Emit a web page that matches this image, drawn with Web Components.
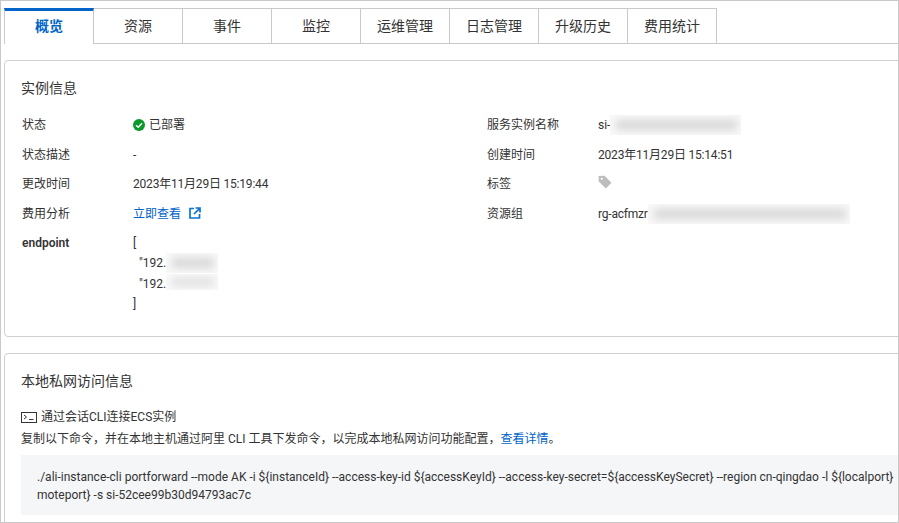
<!DOCTYPE html>
<html lang="zh">
<head>
<meta charset="utf-8">
<style>
  html, body { margin: 0; padding: 0; background: #fff; }
  body { font: 12px/20px Roboto, "Noto Sans CJK SC", sans-serif; color: #333; }
</style>
</head>
<body>
<page-frame>
  <tab-bar>
    <tab-item active>概览</tab-item>
    <tab-item>资源</tab-item>
    <tab-item>事件</tab-item>
    <tab-item>监控</tab-item>
    <tab-item>运维管理</tab-item>
    <tab-item>日志管理</tab-item>
    <tab-item>升级历史</tab-item>
    <tab-item>费用统计</tab-item>
  </tab-bar>

  <info-card heading="实例信息" style="--card-height: 277px; margin-top: 16px">
    <info-grid>
      <info-row label="状态"><status-ok>已部署</status-ok></info-row>
      <info-row label="服务实例名称">si-<blur-mask w="131" h="20"></blur-mask></info-row>
      <info-row label="状态描述">-</info-row>
      <info-row label="创建时间"><tight-text>2023年11月29日 15:14:51</tight-text></info-row>
      <info-row label="更改时间"><tight-text>2023年11月29日 15:19:44</tight-text></info-row>
      <info-row label="标签"><tag-icon></tag-icon></info-row>
      <info-row label="费用分析"><ext-link>立即查看</ext-link></info-row>
      <info-row label="资源组"><tight-text>rg-acfmzr</tight-text><blur-mask w="202" h="20"></blur-mask></info-row>
      <info-row label="endpoint" strong>
        <endpoint-list>
          <div>[</div>
          <div class="ip">"192.<blur-mask w="52" h="20"></blur-mask></div>
          <div class="ip">"192.<blur-mask w="52" h="16"></blur-mask></div>
          <div>]</div>
        </endpoint-list>
      </info-row>
    </info-grid>
  </info-card>

  <info-card heading="本地私网访问信息" style="--card-height: 300px; margin-top: 16px">
    <access-guide>
      <span slot="title">通过会话CLI连接ECS实例</span>
      <span slot="desc">复制以下命令，并在本地主机通过阿里 CLI 工具下发命令，以完成本地私网访问功能配置，<a-link>查看详情</a-link>。</span>
      <code-block>./ali-instance-cli portforward --mode AK -i ${instanceId} --access-key-id ${accessKeyId} --access-key-secret=${accessKeySecret} --region cn-qingdao -l ${localport}
moteport} -s si-52cee99b30d94793ac7c</code-block>
    </access-guide>
  </info-card>
</page-frame>

<script>
function component(name, css, html, setup) {
  class C extends HTMLElement {
    constructor() {
      super();
      const shadow = this.attachShadow({ mode: "open" });
      shadow.innerHTML = `<style>${css}</style>${html}`;
    }
    connectedCallback() {
      if (setup) setup(this);
    }
  }
  customElements.define(name, C);
}

component("page-frame", `
  :host { display: block; box-sizing: border-box; width: 899px; height: 523px; border: 1px solid #c9c9c9; overflow: hidden; padding: 7px 0 0 3px; }
`, `<slot></slot>`);

component("tab-bar", `
  :host { display: flex; height: 36px; box-sizing: border-box; border-bottom: 1px solid #c9c9c9; margin-right: -1px; }
`, `<slot></slot>`);

component("tab-item", `
  :host { display: flex; align-items: center; justify-content: center; box-sizing: border-box; width: 89px; height: 36px; padding-bottom: 1px; font-size: 14px; color: #333; border: 1px solid #c9c9c9; border-left: 0; background: #fff; }
  :host([active]) { width: 90px; color: #0064c8; font-weight: 600; border-left: 1px solid #c9c9c9; border-top: 3px solid #0064c8; border-bottom: 0; padding-bottom: 3px; }
`, `<slot></slot>`);

component("info-card", `
  :host { display: block; box-sizing: border-box; width: 1000px; height: var(--card-height); border: 1px solid #d0d0d0; border-radius: 4px; padding: 17px 16px 0; }
  h3 { margin: 0 0 16px; font-size: 14px; line-height: 20px; font-weight: 400; color: #333; }
`, `<h3></h3><slot></slot>`, el => {
  el.shadowRoot.querySelector("h3").textContent = el.getAttribute("heading");
});

component("info-grid", `
  :host { display: grid; grid-template-columns: 465px 1fr; row-gap: 9.5px; padding-top: 1px; }
`, `<slot></slot>`);

component("info-row", `
  :host { display: grid; grid-template-columns: 111px 1fr; line-height: 20px; padding-left: 1px; }
  :host([strong]) .label { font-weight: 600; }
  .label { color: #333; height: 20px; }
  .value { min-height: 20px; }
`, `<div class="label"></div><div class="value"><slot></slot></div>`, el => {
  el.shadowRoot.querySelector(".label").textContent = el.getAttribute("label");
});

component("tight-text", `:host { letter-spacing: -.2px; }`, `<slot></slot>`);

component("endpoint-list", `
  :host { display: block; }
  ::slotted(div) { height: 20.300px; }
  ::slotted(.ip) { padding-left: 6px; }
`, `<slot></slot>`);

component("blur-mask", `
  :host { display: inline-block; position: relative; overflow: hidden; vertical-align: top; background: #f9f9f9; }
  i { position: absolute; left: 6px; right: 4px; top: 5px; bottom: 5px; background: #d6d6d6; filter: blur(4px); }
`, `<i></i>`, el => {
  el.style.width = el.getAttribute("w") + "px";
  el.style.height = el.getAttribute("h") + "px";
});

component("status-ok", `
  :host { display: flex; align-items: center; gap: 4px; height: 20px; }
  svg { display: block; }
`, `<svg width="12" height="12" viewBox="0 0 12 12"><circle cx="6" cy="6" r="6" fill="#0a9a2a"/><path d="M3 6.200 5.200 8.300 9 4.200" fill="none" stroke="#fff" stroke-width="1.500"/></svg><slot></slot>`);

component("ext-link", `
  :host { display: flex; align-items: center; gap: 8px; height: 20px; color: #0064c8; }
  svg { display: block; margin-top: -1px; }
`, `<slot></slot><svg width="12" height="12" viewBox="0 0 12 12"><path d="M5 1.500H1v9.500h9.500V7" fill="none" stroke="#0a74d4" stroke-width="1.700"/><path d="M6.500 1h4.500v4.500M10.700 1.300 5 7" fill="none" stroke="#0a74d4" stroke-width="1.700"/></svg>`);

component("tag-icon", `
  :host { display: block; height: 20px; padding-top: 1px; box-sizing: border-box; line-height: 0; }
`, `<svg width="14" height="14" viewBox="0 0 14 14"><path d="M.5 1 6.500 .8 13.500 7.800 7.800 13.500 .8 6.500Z" fill="#bdbdbd"/><circle cx="3.800" cy="3.800" r="1.100" fill="#fff"/></svg>`);

component("a-link", `:host { color: #0064c8; }`, `<slot></slot>`);

component("access-guide", `
  :host { display: block; }
  .title { display: flex; align-items: center; gap: 4px; line-height: 20px; margin-top: 16px; }
  svg { display: block; }
  .desc { line-height: 20px; margin-top: 2px; }
`, `<div class="title"><svg width="16" height="11" viewBox="0 0 16 11"><rect x=".5" y=".5" width="15" height="10" fill="none" stroke="#333"/><path d="M3 3l2.500 2L3 7" fill="none" stroke="#333"/><path d="M8 7.500h4.500" stroke="#333"/></svg><slot name="title"></slot></div><div class="desc"><slot name="desc"></slot></div><slot></slot>`);

component("code-block", `
  :host { display: block; box-sizing: border-box; height: 60px; margin-top: 6px; padding: 13px 16px; background: #f5f6f8; white-space: pre; line-height: 18px; color: #333; font-variant-ligatures: none; }
`, `<slot></slot>`);
</script>
</body>
</html>
